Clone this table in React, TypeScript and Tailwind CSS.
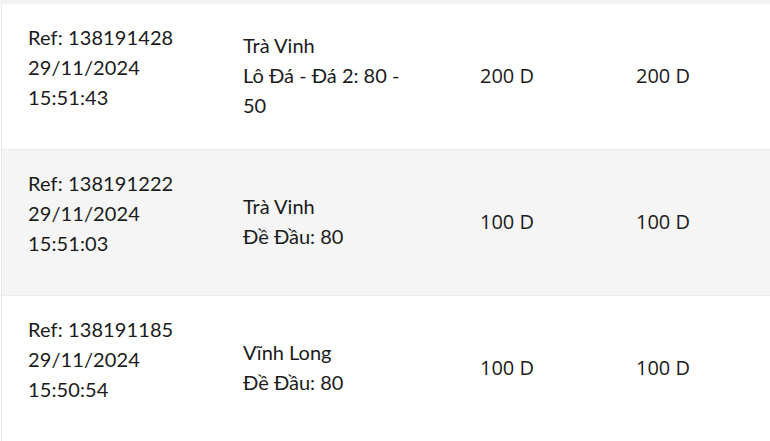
const rows = [
  { ref: "138191428", date: "29/11/2024", time: "15:51:43", place: "Trà Vinh", bet: "Lô Đá - Đá 2: 80 - 50", stake: "200 D", win: "200 D", alt: false },
  { ref: "138191222", date: "29/11/2024", time: "15:51:03", place: "Trà Vinh", bet: "Đề Đầu: 80", stake: "100 D", win: "100 D", alt: true },
  { ref: "138191185", date: "29/11/2024", time: "15:50:54", place: "Vĩnh Long", bet: "Đề Đầu: 80", stake: "100 D", win: "100 D", alt: false },
];

export default function App() {
  return (
    <div className="min-h-[441px] w-[770px] overflow-hidden bg-white text-[#1b1b1b]" style={{ fontFamily: "Lato, 'Noto Sans', sans-serif" }}>
      <div className="h-[4px] bg-[#f3f3f3]" />
      <div className="ml-px border-l border-[#e6e6e6]">
        {rows.map((r, i) => (
          <div
            key={i}
            className={`flex h-[146px] items-center border-b border-[#ebebeb] ${r.alt ? "bg-[#f5f5f5]" : "bg-white"}`}
          >
            <div className="w-[241px] shrink-0 pb-[20px] pl-[26px] text-[20px] leading-[30px] tracking-[0.1px]">
              <div>Ref: {r.ref}</div>
              <div>{r.date}</div>
              <div>{r.time}</div>
            </div>
            <div className="w-[237px] shrink-0 pb-[3px] pr-[62px] text-[20px] leading-[30px]">
              <div>{r.place}</div>
              <div>{r.bet}</div>
            </div>
            <div className="w-[156px] shrink-0 pb-[2px] text-[20px] leading-[30px]" style={{ fontFamily: "'Open Sans', sans-serif" }}>
              {r.stake}
            </div>
            <div className="flex-1 pb-[2px] text-[20px] leading-[30px]" style={{ fontFamily: "'Open Sans', sans-serif" }}>
              {r.win}
            </div>
          </div>
        ))}
      </div>
    </div>
  );
}
